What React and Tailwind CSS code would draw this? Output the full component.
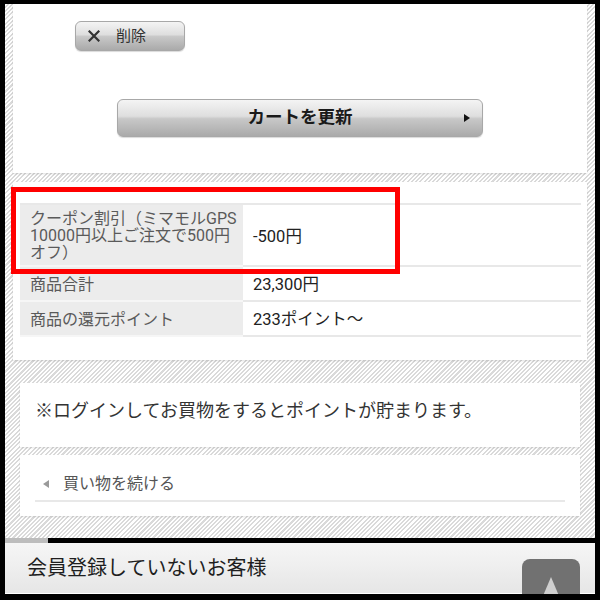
export default function App() {
  const btnBg =
    "bg-[linear-gradient(to_bottom,#f4f4f4_0%,#dedede_45%,#c8c8c8_52%,#aaaaaa_100%)]";
  return (
    <div className="relative w-[600px] h-[600px] bg-black overflow-hidden pt-[4px] px-[5px] font-['Roboto','Noto_Sans_CJK_JP',sans-serif]">
      <div className="relative h-[590px] overflow-hidden flex flex-col bg-[repeating-linear-gradient(135deg,#ffffff_0px,#ffffff_1.5px,#dadada_1.5px,#dadada_3px)]">
        {/* Card 1: buttons */}
        <div className="mx-[8px] h-[169px] shrink-0 bg-white shadow-[0_1px_2px_rgba(0,0,0,0.12)] flex flex-col">
          <div
            className={`ml-[62px] mt-[17px] w-[110px] h-[30px] rounded-[6px] border border-[#a8a8a8] ${btnBg} flex items-center pl-[12px] text-[15px] text-[#333] shadow-[0_1px_1px_rgba(0,0,0,0.15)]`}
          >
            <svg width="12" height="12" viewBox="0 0 12 12">
              <path d="M1.5 1.5 L10.5 10.5 M10.5 1.5 L1.5 10.5" stroke="#333" strokeWidth="2.2" strokeLinecap="square" />
            </svg>
            <span className="ml-[16px] leading-none">削除</span>
          </div>
          <div
            className={`relative ml-[104px] mt-[48px] w-[366px] h-[38px] rounded-[6px] border border-[#a8a8a8] ${btnBg} flex items-center justify-center text-[17.5px] font-bold text-[#1a1a1a] shadow-[0_1px_1px_rgba(0,0,0,0.15)]`}
          >
            <span className="leading-none">カートを更新</span>
            <svg className="absolute right-[12px] top-[14px]" width="6" height="8" viewBox="0 0 6 8">
              <path d="M0 0 L6 4 L0 8 Z" fill="#111" />
            </svg>
          </div>
        </div>

        {/* Card 2: table */}
        <div className="mx-[8px] mt-[9px] h-[178px] shrink-0 bg-white shadow-[0_1px_2px_rgba(0,0,0,0.12)] pt-[21px] pl-[7px] pr-[6px]">
          <div className="border-t-2 border-[#e8e8e8]">
            <div className="flex h-[62px]">
              <div className="w-[223px] shrink-0 bg-[#ececec] border-b-2 border-[#f6f6f6] flex flex-col justify-center pl-[10px] text-[16px] leading-[17px] text-[#5a5a5a]">
                <div>クーポン割引（ミマモルGPS</div>
                <div>10000円以上ご注文で500円</div>
                <div>オフ）</div>
              </div>
              <div className="flex-1 border-b-2 border-[#e8e8e8] flex items-center pl-[10px] pt-[4px] text-[16.5px] text-[#222]">
                -500円
              </div>
            </div>
            <div className="flex h-[35px]">
              <div className="w-[223px] shrink-0 bg-[#ececec] border-b-2 border-[#f6f6f6] flex items-center pl-[10px] pt-[3px] text-[16px] text-[#5a5a5a]">
                商品合計
              </div>
              <div className="flex-1 border-b-2 border-[#e8e8e8] flex items-center pl-[10px] pt-[3px] text-[16.5px] text-[#222]">
                23,300円
              </div>
            </div>
            <div className="flex h-[35px]">
              <div className="w-[223px] shrink-0 bg-[#ececec] border-b-2 border-[#f6f6f6] flex items-center pl-[10px] pt-[3px] text-[16px] text-[#5a5a5a]">
                商品の還元ポイント
              </div>
              <div className="flex-1 border-b-2 border-[#e8e8e8] flex items-center pl-[10px] pt-[3px] text-[16.5px] text-[#222]">
                233ポイント〜
              </div>
            </div>
          </div>
        </div>

        {/* Card 3: notice */}
        <div className="mx-[15px] mt-[23px] h-[64px] shrink-0 bg-white shadow-[0_1px_2px_rgba(0,0,0,0.1)] pl-[15px] pt-[16px] text-[18px] leading-[24px] text-[#333]">
          ※ログインしてお買物をするとポイントが貯まります。
        </div>

        {/* Card 4: continue shopping */}
        <div className="mx-[15px] mt-[8px] h-[61px] shrink-0 bg-white shadow-[0_1px_2px_rgba(0,0,0,0.1)] px-[15px] pt-[15px]">
          <div className="h-[32px] border-b-2 border-[#e8e8e8] flex items-center pl-[8px] pb-[2px] text-[16px] text-[#555]">
            <svg width="6" height="8" viewBox="0 0 6 8">
              <path d="M6 0 L0 4 L6 8 Z" fill="#9a9a9a" />
            </svg>
            <span className="ml-[14px]">買い物を続ける</span>
          </div>
        </div>

        {/* progress line */}
        <div className="mt-[22px] h-[5px] shrink-0 flex">
          <div className="w-[43px] bg-[#bdbdbd]" />
          <div className="flex-1 bg-black" />
        </div>

        {/* footer */}
        <div className="h-[51px] shrink-0 bg-[linear-gradient(to_bottom,#f6f6f6,#e6e6e6)] border-b border-white flex items-center pl-[22px] text-[20px] text-[#1e1e1e]">
          会員登録していないお客様
        </div>

        {/* floating top button */}
        <div className="absolute left-[517px] top-[555px] w-[58px] h-[50px] rounded-[8px] bg-[#717171]">
          <svg className="absolute left-0 top-0" width="58" height="50" viewBox="0 0 58 50">
            <path d="M29 18 L40 44 L18 44 Z" fill="#cfcfcf" />
          </svg>
        </div>
      </div>

      {/* red highlight annotation */}
      <div className="absolute left-[11px] top-[187px] w-[389px] h-[87px] border-[5px] border-[#ff0000]" />
    </div>
  );
}
